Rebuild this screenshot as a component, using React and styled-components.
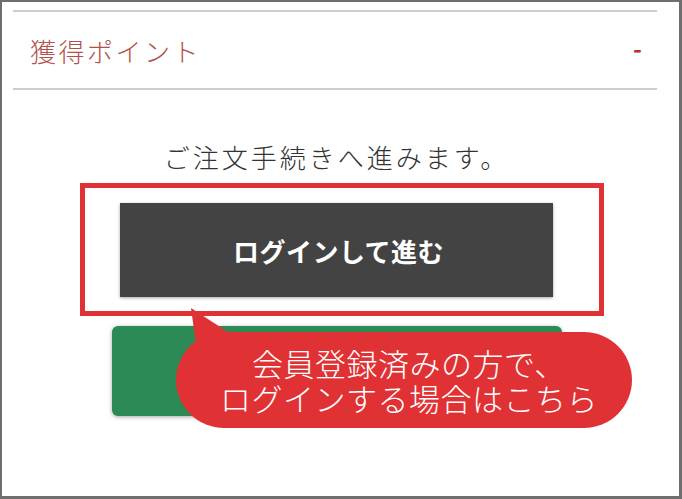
import React from "react";
import styled, { createGlobalStyle } from "styled-components";

const GlobalStyle = createGlobalStyle`
  html, body {
    margin: 0;
    padding: 0;
    background: #ffffff;
  }
  body {
    font-family: "Noto Sans CJK JP", "Noto Sans", sans-serif;
  }
`;

export default function App() {
  return (
    <>
      <GlobalStyle />
      <Frame>
        <PointRow>
          <PointLabel>獲得ポイント</PointLabel>
          <PointValue>-</PointValue>
        </PointRow>
        <Section>
          <Message>ご注文手続きへ進みます。</Message>
          <LoginButton>ログインして進む</LoginButton>
          <GreenButton />
        </Section>

        <Highlight />
        <Tail width="50" height="50" viewBox="0 0 50 50">
          <path d="M3 2 L9 46 L46 30 Z" fill="#e03234" />
        </Tail>
        <Bubble>
          <BubbleLine>会員登録済みの方で、</BubbleLine>
          <BubbleLine>ログインする場合はこちら</BubbleLine>
        </Bubble>
      </Frame>
    </>
  );
}

const Frame = styled.div`
  position: relative;
  width: 682px;
  height: 499px;
  box-sizing: border-box;
  background: #ffffff;
  border-top: 2px solid #6e6e6e;
  border-left: 2px solid #6e6e6e;
  border-right: 3px solid #6e6e6e;
  border-bottom: 3px solid #6e6e6e;
  overflow: hidden;
`;

const PointRow = styled.div`
  box-sizing: border-box;
  width: 644px;
  height: 80px;
  margin: 8px 0 0 11px;
  padding: 0 15px 0 17px;
  border-top: 2px solid #cdcdcd;
  border-bottom: 2px solid #cdcdcd;
  display: flex;
  align-items: center;
  justify-content: space-between;
`;

const PointLabel = styled.span`
  font-size: 26px;
  font-weight: 300;
  letter-spacing: 2.5px;
  color: #b3504c;
`;

const PointValue = styled.span`
  margin-bottom: 6px;
  font-size: 24px;
  font-weight: 700;
  color: #b8322c;
`;

const Section = styled.div`
  display: flex;
  flex-direction: column;
  align-items: center;
  padding-right: 8px;
`;

const Message = styled.p`
  margin: 51px 0 0;
  font-size: 26px;
  font-weight: 300;
  line-height: 32px;
  letter-spacing: 3px;
  color: #333333;
`;

const LoginButton = styled.button`
  margin-top: 30px;
  width: 433px;
  height: 94px;
  border: none;
  padding: 0 0 0 4px;
  background: #434343;
  color: #ffffff;
  font-family: "Noto Sans CJK JP", "Noto Sans", sans-serif;
  font-size: 26px;
  font-weight: 700;
  letter-spacing: 0.5px;
  box-shadow: 0 1px 3px rgba(0, 0, 0, 0.35);
  cursor: pointer;
`;

const GreenButton = styled.button`
  margin-top: 29px;
  width: 450px;
  height: 90px;
  border: none;
  border-radius: 6px;
  background: #2b8a56;
  box-shadow: 0 1px 4px rgba(0, 0, 0, 0.35);
  cursor: pointer;
`;

const Highlight = styled.div`
  position: absolute;
  left: 78px;
  top: 181px;
  width: 524px;
  height: 133px;
  box-sizing: border-box;
  border: 5px solid #e03234;
`;

const Tail = styled.svg`
  position: absolute;
  left: 186px;
  top: 304px;
`;

const Bubble = styled.div`
  position: absolute;
  left: 174px;
  top: 330px;
  width: 456px;
  height: 96px;
  box-sizing: border-box;
  border-radius: 48px;
  background: #e03234;
  color: #ffffff;
  padding-left: 10px;
  display: flex;
  flex-direction: column;
  align-items: center;
  justify-content: center;
`;

const BubbleLine = styled.span`
  display: block;
  height: 35px;
  font-size: 31px;
  font-weight: 300;
  line-height: 35px;
  letter-spacing: 0.5px;
  white-space: nowrap;
`;
